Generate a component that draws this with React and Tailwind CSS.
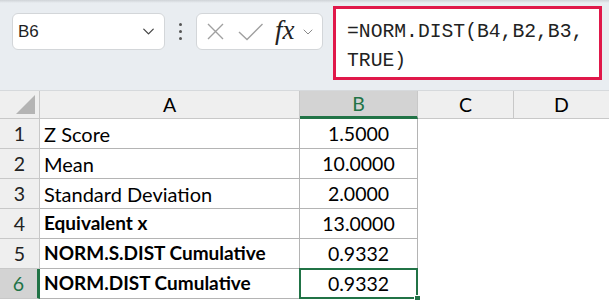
import { ChevronDown } from 'lucide-react';

const rows = [
  { n: 1, label: 'Z Score', value: '1.5000' },
  { n: 2, label: 'Mean', value: '10.0000' },
  { n: 3, label: 'Standard Deviation', value: '2.0000' },
  { n: 4, label: 'Equivalent x', value: '13.0000', bold: true },
  { n: 5, label: 'NORM.S.DIST Cumulative', value: '0.9332', bold: true },
  { n: 6, label: 'NORM.DIST Cumulative', value: '0.9332', bold: true, active: true },
];

const cellFont = { fontFamily: 'Lato, "Open Sans", sans-serif' };

function Toolbar() {
  return (
    <div className="relative flex h-[91px] items-start border-b border-[#d6d9dc] bg-[#e9edf1] pl-[12px] pt-[6px]">
      <div className="absolute inset-x-0 top-0 h-[3px] bg-gradient-to-b from-[#cfd3d7] to-[#e9edf1]" />
      <div className="mt-[7px] flex h-[37px] w-[153px] items-center justify-between rounded-[6px] border border-[#d3d6d9] bg-white pl-[5px] pr-[6px]">
        <span className="text-[17px] text-[#1f1f1f]" style={{ fontFamily: '"Liberation Sans", Arial, sans-serif' }}>B6</span>
        <ChevronDown size={19} strokeWidth={1.6} className="text-[#444]" />
      </div>
      <div className="mt-[7px] flex h-[37px] w-[31px] flex-col items-center justify-center gap-[4px]">
        <span className="h-[3px] w-[3px] rounded-full bg-[#555]" />
        <span className="h-[3px] w-[3px] rounded-full bg-[#555]" />
        <span className="h-[3px] w-[3px] rounded-full bg-[#555]" />
      </div>
      <div className="mt-[7px] flex h-[37px] w-[127px] items-center rounded-[6px] border border-[#d3d6d9] bg-white pl-[9px]">
        <svg width="19" height="19" viewBox="0 0 19 19" className="text-[#a0a0a0]">
          <path d="M2 2 L17 17 M17 2 L2 17" stroke="currentColor" strokeWidth="1.4" fill="none" />
        </svg>
        <svg width="26" height="19" viewBox="0 0 26 19" className="ml-[13px] text-[#a0a0a0]">
          <path d="M1 10 L9 17.5 L24.5 2" stroke="currentColor" strokeWidth="1.4" fill="none" />
        </svg>
        <span className="ml-[11px] mb-[2px] text-[27px] italic leading-none text-[#222]" style={{ fontFamily: '"Liberation Serif", "Times New Roman", serif' }}>fx</span>
        <ChevronDown size={16} strokeWidth={1.5} className="ml-[5px] text-[#8a8a8a]" />
      </div>
      <div className="ml-[10px] h-[74px] w-[269px] border-[3px] border-[#e0184a] bg-white pl-[11px] pt-[9px] text-[19.7px] leading-[29px] text-[#222]" style={{ fontFamily: '"Liberation Mono", "Courier New", monospace' }}>
        <div>=NORM.DIST(B4,B2,B3,</div>
        <div>TRUE)</div>
      </div>
    </div>
  );
}

function Sheet() {
  return (
    <div className="grid grid-cols-[40px_260px_118px_96px_95px] grid-rows-[28px_repeat(6,30px)] text-[19.5px] text-black" style={cellFont}>
      <div className="relative border-b border-r border-[#c8c8c8] bg-[#efefef]">
        <div className="absolute bottom-[4px] right-[4px] h-0 w-0 border-b-[19px] border-l-[19px] border-b-[#b4b4b4] border-l-transparent" />
      </div>
      <div className="flex items-center justify-center border-b border-r border-[#c8c8c8] bg-[#efefef]">A</div>
      <div className="flex items-center justify-center border-b-[3px] border-r border-b-[#217346] border-r-[#c8c8c8] bg-[#d3d3d3] text-[#217346]">B</div>
      <div className="flex items-center justify-center border-b border-r border-[#c8c8c8] bg-[#efefef]">C</div>
      <div className="flex items-center justify-center border-b border-[#c8c8c8] bg-[#efefef]">D</div>
      {rows.map((r) => (
        <Row key={r.n} r={r} />
      ))}
    </div>
  );
}

function Row({ r }) {
  return (
    <>
      <div
        className={
          r.active
            ? 'flex items-center justify-center border-b border-r-[3px] border-b-[#c8c8c8] border-r-[#217346] bg-[#d3d3d3] text-[#217346]'
            : 'flex items-center justify-center border-b border-r border-[#c8c8c8] bg-[#efefef] text-[#222]'
        }
      >
        {r.n}
      </div>
      <div className={`flex items-center border-b border-r border-[#b4b4b4] pl-[4px] ${r.bold ? 'font-bold text-[19px]' : 'text-[20px]'}`}>{r.label}</div>
      <div className="relative flex items-center justify-center border-b border-r border-[#b4b4b4]">
        {r.value}
        {r.active && (
          <>
            <div className="absolute inset-[-1px] border-2 border-[#217346]" />
            <div className="absolute bottom-[-4px] right-[-4px] h-[7px] w-[7px] border border-white bg-[#217346]" />
          </>
        )}
      </div>
      <div className="bg-white" />
      <div className="bg-white" />
    </>
  );
}

export default function App() {
  return (
    <div className="h-[300px] w-[609px] overflow-hidden bg-white">
      <Toolbar />
      <Sheet />
    </div>
  );
}
